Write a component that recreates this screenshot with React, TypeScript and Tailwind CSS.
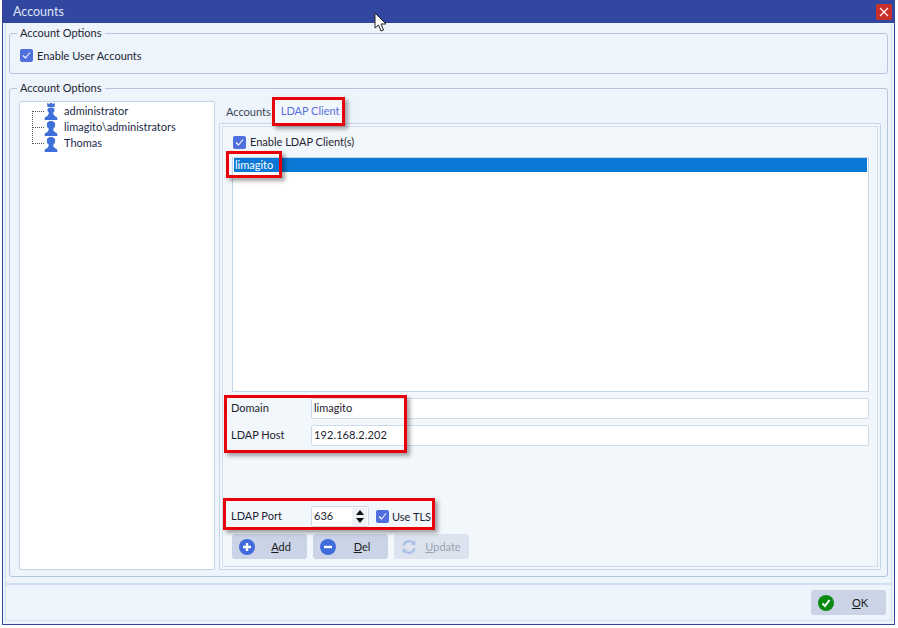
import React from "react";

const Check = () => (
  <span className="flex h-[13px] w-[13px] shrink-0 items-center justify-center rounded-[2px] bg-[#4f6fdc]">
    <svg width="11" height="11" viewBox="0 0 11 11" fill="none" stroke="#fff" strokeWidth="1.1">
      <path d="M2 5.5 L4.5 8 L9 2.5" />
    </svg>
  </span>
);

const Pawn = ({ crown }: { crown?: boolean }) => (
  <svg width="14" height="17" viewBox="0 0 14 17" fill="#3f6fd8" className="-mt-[2px] block shrink-0">
    {crown ? (
      <>
        <path d="M3 0 L5 1 L6 0 L8 0 L9 1 L11 0 L10.5 4 L3.5 4 Z" />
        <ellipse cx="7" cy="7" rx="3.6" ry="2.6" />
      </>
    ) : (
      <ellipse cx="7" cy="6" rx="4.2" ry="4" />
    )}
    <path d="M4.8 9 C5 11.5 4 12.8 1 14.2 L0.5 17 L13.5 17 L13 14.2 C10 12.8 9 11.5 9.2 9 Z" />
  </svg>
);

const Btn = ({ icon, u, rest, disabled }: { icon: React.ReactNode; u: string; rest: string; disabled?: boolean }) => (
  <div className={`flex h-[25px] w-[75px] items-center rounded-[3px] pl-[7px] ${disabled ? "bg-[#dde3ee] text-[#9aa3b2]" : "bg-[#cbd3e6] text-[#1b1b1b]"}`}>
    {icon}
    <span className="flex-1 text-center">
      <span className="underline">{u}</span>
      {rest}
    </span>
  </div>
);

const RedBox = ({ c }: { c: string }) => (
  <div className={`absolute border-[3px] border-[#e8000b] shadow-[3px_3px_4px_rgba(0,0,0,0.35)] ${c}`} />
);

const Field = ({ label, value, mono }: { label: string; value: string; mono?: boolean }) => (
  <div className="flex h-[21px] items-center">
    <span className="w-[80px] shrink-0 pb-[1px]">{label}</span>
    <div className={`flex h-[21px] flex-1 items-center rounded-[2px] border border-[#cfdbea] bg-white pb-[1px] pl-[2px] ${mono ? "tracking-[0.1px]" : ""}`}>{value}</div>
  </div>
);

export default function App() {
  return (
    <div className="relative h-[628px] w-[898px] overflow-hidden bg-white text-[11px] leading-[16px] text-[#1e2430] [font-family:'Lato','Noto_Sans',sans-serif]">
      <div className="ml-[2px] flex h-[625px] w-[893px] flex-col border-x border-b border-[#3248a0] bg-[#edf4fc]">
        <div className="flex h-[23px] shrink-0 items-center justify-between bg-[#3248a0] pl-[10px] pr-[2px] text-[#dfe6f5]">
          <span className="text-[12.5px]">Accounts</span>
          <div className="flex h-[16px] w-[16px] items-center justify-center rounded-[2px] bg-[#c9302a]">
            <svg width="10" height="10" viewBox="0 0 10 10" stroke="#fff" strokeWidth="1.1">
              <path d="M1 1 L9 9 M9 1 L1 9" />
            </svg>
          </div>
        </div>
        <div className="mx-[2px] mb-[3px] flex flex-1 flex-col border-x border-b border-[#cfe0f2]">
          <div className="flex flex-1 flex-col gap-[6px] px-[3px] pt-[2px]">
            <fieldset className="h-[49px] rounded-[3px] border border-[#b5c6dc] pl-[6px]">
              <legend className="ml-[1px] px-[3px]">Account Options</legend>
              <div className="flex h-[26px] items-center gap-[4px] pl-[4px] pt-[3px]">
                <Check />
                <span>Enable User Accounts</span>
              </div>
            </fieldset>
            <fieldset className="flex h-[497px] rounded-[3px] border border-[#b5c6dc] pl-[6px]">
              <legend className="ml-[1px] px-[3px]">Account Options</legend>
              <div className="flex h-[481px] gap-[4px] pl-[3px] pt-[5px]">
                <div className="relative h-[469px] w-[196px] shrink-0 rounded-[2px] border border-[#c5d5e8] bg-white">
                  <div className="absolute left-[12px] top-[9px] h-[33px] w-[12px] border-y border-l border-dotted border-[#555]" />
                  <div className="absolute left-[12px] top-[25px] w-[12px] border-t border-dotted border-[#555]" />
                  <div className="relative flex flex-col pl-[24px] pt-[2px]">
                    {[
                      ["administrator", true],
                      ["limagito\\administrators", false],
                      ["Thomas", false],
                    ].map(([n, c]) => (
                      <div key={n as string} className="flex h-[16px] items-center gap-[6px] text-[#1a2a4a]">
                        <Pawn crown={c as boolean} />
                        <span className="pb-[3px]">{n}</span>
                      </div>
                    ))}
                  </div>
                </div>
                <div className="flex h-[469px] w-[662px] flex-col">
                  <div className="flex h-[22px] items-end pl-[7px]">
                    <span className="pb-[3px] text-[#3c4656]">Accounts</span>
                    <span className="ml-[4px] h-[22px] rounded-t-[2px] bg-[#f2f7fc] px-[6px] pt-[2px] text-[#5a6fe0]">LDAP Client</span>
                  </div>
                  <div className="h-[447px] rounded-[2px] border border-[#c5d5e8] bg-[#f2f7fc] p-[2px]">
                    <div className="flex h-[441px] flex-col border border-[#cfdeee] px-[8px] pt-[8px]">
                      <div className="flex h-[14px] items-center gap-[4px] pl-[2px]">
                        <Check />
                        <span>Enable LDAP Client(s)</span>
                      </div>
                      <div className="ml-[1px] mt-[8px] h-[235px] border border-[#c5d5e8] bg-white px-[1px]">
                        <div className="h-[14px] bg-[#0a78d4] pl-[1px] leading-[14px] text-white">limagito</div>
                      </div>
                      <div className="mt-[6px] flex flex-col gap-[6px]">
                        <Field label="Domain" value="limagito" />
                        <Field label="LDAP Host" value="192.168.2.202" mono />
                      </div>
                      <div className="mt-[60px] flex h-[21px] items-center">
                        <span className="w-[80px] shrink-0 pb-[1px]">LDAP Port</span>
                        <div className="flex h-[21px] w-[58px] items-center justify-between rounded-[2px] border border-[#cfdbea] bg-white pl-[2px] pr-[1px]">
                          <span className="pb-[1px]">636</span>
                          <div className="flex h-[18px] w-[15px] items-center justify-center bg-[#eef1f6]">
                            <svg width="10" height="15" viewBox="0 0 10 15" fill="#111">
                              <path d="M5 1 L9 6 L1 6 Z M1 9 L9 9 L5 14 Z" />
                            </svg>
                          </div>
                        </div>
                        <div className="ml-[7px] flex items-center gap-[3px]">
                          <Check />
                          <span>Use TLS</span>
                        </div>
                      </div>
                      <div className="ml-[1px] mt-[7px] flex gap-[6px]">
                        <Btn
                          u="A"
                          rest="dd"
                          icon={
                            <svg width="16" height="16" viewBox="0 0 16 16">
                              <circle cx="8" cy="8" r="8" fill="#3f6bdc" />
                              <path d="M8 4 V12 M4 8 H12" stroke="#fff" strokeWidth="2.4" />
                            </svg>
                          }
                        />
                        <Btn
                          u="D"
                          rest="el"
                          icon={
                            <svg width="16" height="16" viewBox="0 0 16 16">
                              <circle cx="8" cy="8" r="8" fill="#3f6bdc" />
                              <path d="M4 8 H12" stroke="#fff" strokeWidth="2.4" />
                            </svg>
                          }
                        />
                        <Btn
                          u="U"
                          rest="pdate"
                          disabled
                          icon={
                            <svg width="16" height="16" viewBox="0 0 16 16" fill="none" stroke="#a9bfe8" strokeWidth="2.4">
                              <path d="M2.5 6.5 A6 6 0 0 1 13 4.5" />
                              <path d="M13.5 9.5 A6 6 0 0 1 3 11.5" />
                              <path d="M14.5 1.5 V6 H10 Z M1.5 14.5 V10 H6 Z" fill="#a9bfe8" stroke="none" />
                            </svg>
                          }
                        />
                      </div>
                    </div>
                  </div>
                </div>
              </div>
            </fieldset>
          </div>
          <div className="flex h-[37px] shrink-0 items-center justify-end border-t-2 border-[#cfe0f2] pr-[5px]">
            <div className="flex h-[25px] w-[75px] items-center rounded-[3px] bg-[#cbd3e6] pl-[7px] text-[#1b1b1b]">
              <svg width="16" height="16" viewBox="0 0 16 16" fill="none">
                <circle cx="8" cy="8" r="8" fill="#0b8a12" />
                <path d="M4.5 8.5 L7 11 L11.5 5" stroke="#fff" strokeWidth="2" />
              </svg>
              <span className="flex-1 text-center">
                <span className="underline">O</span>K
              </span>
            </div>
          </div>
        </div>
      </div>
      <RedBox c="left-[272px] top-[97px] h-[29px] w-[73px]" />
      <RedBox c="left-[226px] top-[151px] h-[27px] w-[56px]" />
      <RedBox c="left-[224px] top-[395px] h-[58px] w-[183px]" />
      <RedBox c="left-[223px] top-[498px] h-[32px] w-[212px]" />
      <svg width="14" height="20" viewBox="0 0 14 20" className="absolute left-[374px] top-[12px]">
        <path d="M1 1 L1 16 L4.5 13 L7 19 L9.5 18 L7 12 L12 12 Z" fill="#fff" stroke="#222" strokeWidth="1" />
      </svg>
    </div>
  );
}
